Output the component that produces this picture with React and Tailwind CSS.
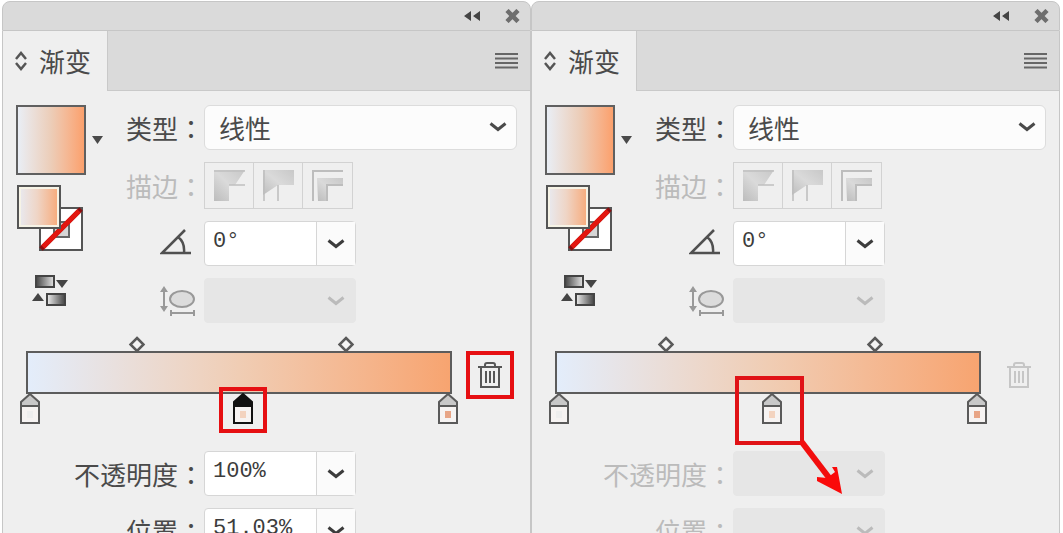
import React, { useState } from 'react';
import clsx from 'clsx';

const Chevron = ({ className }) => (
  <svg viewBox="0 0 18 12" className={clsx('w-[18px] h-3 pointer-events-none', className)} fill="none" stroke="currentColor" strokeWidth="3">
    <path d="M1.5 2.5 9 8.5 16.5 2.5" />
  </svg>
);

const FillStrokeIcon = () => (
  <svg width="66" height="66" viewBox="0 0 66 66">
    <defs>
      <linearGradient id="fill">
        <stop offset="0" stopColor="#e9e9ee" />
        <stop offset="0.45" stopColor="#efd5c6" />
        <stop offset="1" stopColor="#f7ab7c" />
      </linearGradient>
    </defs>
    <rect x="23" y="23" width="42" height="42" fill="#fff" stroke="#555" strokeWidth="2" />
    <rect x="37" y="37" width="15" height="15" fill="#d6d6d6" stroke="#666" strokeWidth="2" />
    <path d="M24 64 64 24" stroke="#8a1010" strokeWidth="5" />
    <path d="M26 62 62 26" stroke="#e3160f" strokeWidth="5" />
    <rect x="1" y="1" width="42" height="42" fill="#fff" stroke="#555" strokeWidth="2" />
    <rect x="3" y="3" width="38" height="38" fill="url(#fill)" stroke="#f6f3e6" strokeWidth="2" />
  </svg>
);

const SwapIcon = () => (
  <svg width="36" height="32" viewBox="0 0 36 32">
    <defs>
      <linearGradient id="swapA">
        <stop offset="0" stopColor="#444" />
        <stop offset="1" stopColor="#e4e4e4" />
      </linearGradient>
      <linearGradient id="swapB">
        <stop offset="0" stopColor="#eee" />
        <stop offset="1" stopColor="#444" />
      </linearGradient>
    </defs>
    <rect x="4" y="1" width="18" height="11" fill="url(#swapA)" stroke="#444" strokeWidth="2" />
    <path d="M24 5H36L30 13Z" fill="#444" />
    <path d="M0 26H12L6 18Z" fill="#444" />
    <rect x="15" y="19" width="18" height="11" fill="url(#swapB)" stroke="#444" strokeWidth="2" />
  </svg>
);

const AngleIcon = () => (
  <svg width="32" height="26" viewBox="0 0 32 26" fill="none" stroke="#505050" strokeWidth="2.5">
    <path d="M25 1 2 24H31M18 8Q25 13 24 24" />
  </svg>
);

const AspectIcon = () => (
  <svg width="36" height="32" viewBox="0 0 36 32" fill="none" stroke="#999" strokeWidth="2">
    <path d="M4 4V24" />
    <path d="M0 7H8L4 1ZM0 21H8L4 27Z" fill="#999" stroke="none" />
    <ellipse cx="22" cy="14" rx="12" ry="8" fill="#dcdcdc" />
    <path d="M11 28H34M11 25V31M34 25V31" />
  </svg>
);

const strokeIcons = [
  <>
    <path d="M0 0H31L21 15H15V31H0Z" fill="url(#strokeShade)" />
    <path d="M0 1H31M15 15H31" stroke="#c0c0c0" strokeWidth="1.5" />
  </>,
  <>
    <path d="M0 0H31V15H15L0 25Z" fill="url(#strokeShade)" />
    <path d="M1 0V31M15 15V31" stroke="#bdbdbd" strokeWidth="1.5" />
  </>,
  <>
    <path d="M5 8H31V15H15V31H6Z" fill="url(#strokeShade)" />
    <path d="M1 31V1H31M15 31V15H31" stroke="#bdbdbd" strokeWidth="2" fill="none" />
  </>,
];

const TrashIcon = () => (
  <svg width="24" height="28" viewBox="0 0 24 28" fill="none" stroke="currentColor" strokeWidth="2">
    <path d="M0 6H24M7 6V4Q7 2 9 2H15Q17 2 17 4V6M3 6V26H21V6M8 10V22M12 10V22M16 10V22" />
  </svg>
);

const StopIcon = ({ selected, color }) => (
  <svg width="20" height="31" viewBox="0 0 20 31" stroke={selected ? '#111' : '#5a5a5a'} strokeWidth="2">
    <path d="M10 1 1 9V13H19V9Z" fill={selected ? '#111' : '#c8c8c8'} />
    <rect x="1" y="13" width="18" height="17" fill="#f6f3f2" />
    <rect x="7" y="18" width="6" height="7" fill={color} stroke="none" />
  </svg>
);

const Label = ({ htmlFor, disabled, children }) => (
  <label htmlFor={htmlFor} className={clsx('text-right whitespace-nowrap', disabled ? 'text-[#bbbbbb]' : 'text-[#4a4a4a]')}>
    {children}
    <span lang="zh-TW" className="font-['Noto_Sans_CJK_TC',sans-serif]">：</span>
  </label>
);

const ComboField = ({ id, label, value, disabled }) => (
  <div
    className={clsx(
      'flex w-[152px] h-[45px] rounded-sm border',
      disabled ? 'border-[#e6e6e6] bg-[#e6e6e6] text-[#bbbbbb]' : 'border-[#d6d6d6] bg-white text-[#3c3c3c]'
    )}
  >
    <input
      id={id}
      aria-label={label}
      defaultValue={value}
      disabled={disabled}
      className="min-w-0 flex-1 pl-2 pb-1 bg-transparent outline-none font-['Liberation_Mono',monospace] text-[22px]"
    />
    <button
      aria-label={`${label} ▾`}
      disabled={disabled}
      className={clsx('w-[39px] flex items-center justify-center border-l', disabled ? 'border-transparent' : 'border-[#d6d6d6] bg-[#fbfbfb]')}
    >
      <Chevron />
    </button>
  </div>
);

const GradientPanel = ({ id, stopSelected, opacity, position }) => {
  const [type, setType] = useState('线性');
  const disabled = !stopSelected;

  const stops = [
    { left: '0%', color: '#eeeeee' },
    { left: '51%', color: '#f3d3bf', selected: stopSelected, marked: true },
    { left: '100%', color: '#e8a586' },
  ];

  return (
    <section className="min-w-0">
      {/* Title bar */}
      <div className="h-[30px] rounded-t-lg border border-[#c6c6c6] bg-[#dadada] flex items-center justify-end gap-6 pr-2.5 text-[#444444]">
        <button aria-label="折叠">
          <svg width="17" height="10" viewBox="0 0 17 10" fill="currentColor">
            <path d="M0 5 7 0V10ZM9 5 16 0V10Z" />
          </svg>
        </button>
        <button aria-label="关闭" className="text-[#6e6e6e]">
          <svg width="15" height="14" viewBox="0 0 15 14" stroke="currentColor" strokeWidth="4.5">
            <path d="M2 1.5 13 12.5M13 1.5 2 12.5" />
          </svg>
        </button>
      </div>

      {/* Tab strip */}
      <div className="h-[60px] flex border-x border-[#c6c6c6]">
        <button className="w-[104px] pl-3 flex items-center gap-3 bg-[#efefef] text-[#4a4a4a] whitespace-nowrap">
          <svg width="12" height="20" viewBox="0 0 12 20" fill="none" stroke="#555" strokeWidth="2.5">
            <path d="M1 8 6 2 11 8M1 12 6 18 11 12" />
          </svg>
          渐变
        </button>
        <div className="flex-1 flex items-center justify-end pr-3 border-b border-l border-[#c9c9c9] bg-[#dadada]">
          <button aria-label="面板菜单">
            <svg width="23" height="16" viewBox="0 0 23 16" fill="#666">
              <path d="M0 0H23V2H0ZM0 4.5H23V6.5H0ZM0 9H23V11H0ZM0 13.5H23V15.5H0Z" />
            </svg>
          </button>
        </div>
      </div>

      <div className="px-[13px] pt-3.5 border-x border-[#c6c6c6] bg-[#efefef]">
        <div className="flex">
          {/* Swatches */}
          <div className="w-[92px] flex flex-col items-start">
            <div className="flex items-center gap-1.5">
              <button aria-label="渐变" className="w-[70px] h-[70px] border-2 border-[#606060] bg-linear-to-r from-[#e9eef5] via-[#eccdb8] to-[#fba06c]" />
              <svg width="11" height="8" viewBox="0 0 11 8" fill="#4a4a4a">
                <path d="M0 0H11L5.5 8Z" />
              </svg>
            </div>
            <button aria-label="填色" className="mt-2.5 ml-px"><FillStrokeIcon /></button>
            <button aria-label="反向渐变" className="mt-6 ml-4"><SwapIcon /></button>
          </div>

          <div className="flex-1 grid grid-cols-[96px_1fr] gap-y-3 items-center">
            <Label htmlFor={`${id}-type`}>类型</Label>
            <div className="relative">
              <select
                id={`${id}-type`}
                value={type}
                onChange={(e) => setType(e.target.value)}
                className="w-full h-[45px] pl-3.5 appearance-none rounded-md border border-[#dcdcdc] bg-[#fcfcfc] text-[#4a4a4a] outline-none"
              >
                <option>线性</option>
                <option>径向</option>
              </select>
              <Chevron className="absolute right-2.5 top-4 text-[#4a4a4a]" />
            </div>

            <Label disabled>描边</Label>
            <div className="flex justify-self-start border border-[#d2d2d2] divide-x divide-[#d2d2d2]">
              {strokeIcons.map((icon, i) => (
                <button key={i} disabled aria-label={`描边 ${i + 1}`} className="w-[49px] h-[45px] flex items-center justify-center">
                  <svg width="31" height="31" viewBox="0 0 31 31">
                    <defs>
                      <linearGradient id="strokeShade" x1="0" y1="1" x2="1" y2="0">
                        <stop offset="0" stopColor="#bcbcbc" />
                        <stop offset="0.5" stopColor="#dadada" />
                        <stop offset="1" stopColor="#c8c8c8" />
                      </linearGradient>
                    </defs>
                    {icon}
                  </svg>
                </button>
              ))}
            </div>

            <div className="flex justify-end pr-3 pb-1"><AngleIcon /></div>
            <ComboField label="角度" value="0°" />

            <div className="flex justify-end pr-2"><AspectIcon /></div>
            <ComboField label="长宽比" disabled />
          </div>
        </div>

        {/* Gradient slider */}
        <div className="mt-7 pl-2.5 pr-[3px] flex items-start gap-3.5">
          <div className="relative flex-1">
            <div className="h-[43px] border-2 border-[#5c5c5c] bg-linear-to-r from-[#e3edfb] via-[#f0cdb4] to-[#f7a470]" />
            <div className="absolute inset-x-1 inset-y-0">
              {['25.5%', '75.5%'].map((left) => (
                <button key={left} aria-label="中点" className="absolute -top-[15px] -translate-x-1/2" style={{ left }}>
                  <svg width="17" height="17" viewBox="0 0 17 17" fill="#f3f3f3" stroke="#5a5a5a" strokeWidth="2.5">
                    <path d="M8.5 2 15 8.5 8.5 15 2 8.5Z" />
                  </svg>
                </button>
              ))}
              {stops.map((stop) => (
                <button key={stop.left} aria-label="色标" className="absolute top-[42px] -translate-x-1/2" style={{ left: stop.left }}>
                  <StopIcon selected={stop.selected} color={stop.color} />
                  {stop.marked && stopSelected && (
                    <span className="absolute -top-1.5 -left-3.5 w-12 h-[46px] border-4 border-[#e60f12]" />
                  )}
                  {stop.marked && !stopSelected && (
                    <svg className="absolute -top-[17px] -left-[27px] max-w-none" width="110" height="120" viewBox="0 0 110 120">
                      <rect x="2" y="2" width="65" height="65" fill="none" stroke="#e01216" strokeWidth="4" />
                      <path d="M66 65 95 103" stroke="#f20d0d" strokeWidth="6" />
                      <path d="M107 118 82 105 82 101 92 102 100 96 97 91 102 91Z" fill="#fa0a0a" />
                    </svg>
                  )}
                </button>
              ))}
            </div>
          </div>
          <button
            aria-label="删除色标"
            disabled={disabled}
            className={clsx(
              'w-12 h-12 border-4 flex items-center justify-center',
              stopSelected ? 'border-[#e60f12] text-[#565656]' : 'border-transparent text-[#c6c6c6]'
            )}
          >
            <TrashIcon />
          </button>
        </div>

        <div className="mt-[52px] grid grid-cols-[188px_1fr] gap-y-3 items-center">
          <Label htmlFor={`${id}-opacity`} disabled={disabled}>不透明度</Label>
          <ComboField id={`${id}-opacity`} label="不透明度" value={opacity} disabled={disabled} />
          <Label htmlFor={`${id}-position`} disabled={disabled}>位置</Label>
          <ComboField id={`${id}-position`} label="位置" value={position} disabled={disabled} />
        </div>
      </div>
    </section>
  );
};

const App = () => (
  <main
    lang="zh-CN"
    className="h-screen overflow-hidden bg-white pt-px pl-0.5 pr-[3px] grid grid-cols-2 items-start font-['Noto_Sans_CJK_SC',sans-serif] text-[26px] leading-8"
  >
    <GradientPanel id="before" stopSelected opacity="100%" position="51.03%" />
    <GradientPanel id="after" />
  </main>
);

export default App;
